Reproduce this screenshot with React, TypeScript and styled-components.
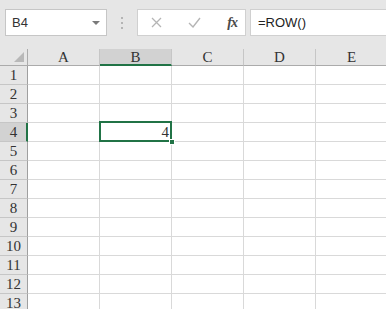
import React from "react";
import styled, { createGlobalStyle } from "styled-components";

const GlobalStyle = createGlobalStyle`
  html, body {
    margin: 0;
    padding: 0;
    background: #ffffff;
  }
  * {
    box-sizing: border-box;
  }
`;

const Page = styled.div`
  width: 386px;
  height: 309px;
  overflow: hidden;
  background: #ffffff;
`;

const Toolbar = styled.div`
  height: 49px;
  background: #e6e6e6;
  display: flex;
  align-items: flex-start;
  padding: 9px 0 0 5px;
`;

const NameBox = styled.div`
  width: 102px;
  height: 27px;
  background: #ffffff;
  border: 1px solid #c6c6c6;
  display: flex;
  align-items: center;
  justify-content: space-between;
  padding: 0 6px 0 6px;
  font-family: "Liberation Sans", Arial, sans-serif;
  font-size: 13px;
  color: #333333;
`;

const Caret = styled.span`
  width: 0;
  height: 0;
  border-left: 4px solid transparent;
  border-right: 4px solid transparent;
  border-top: 4px solid #7a7a7a;
`;

const Grip = styled.div`
  width: 30px;
  height: 27px;
  display: flex;
  flex-direction: column;
  align-items: center;
  justify-content: center;
  gap: 3px;
`;

const Dot = styled.span`
  width: 2px;
  height: 2px;
  background: #b4b4b4;
`;

const FuncBox = styled.div`
  width: 109px;
  height: 27px;
  background: #ffffff;
  border: 1px solid #d0d0d0;
  display: flex;
  align-items: center;
  justify-content: space-between;
  padding: 0 8px 0 13px;
`;

const Fx = styled.span`
  font-family: "Liberation Serif", "Times New Roman", serif;
  font-style: italic;
  font-weight: bold;
  font-size: 14px;
  color: #4a4a4a;
  letter-spacing: -1px;
`;

const FormulaBox = styled.div`
  flex: 1;
  margin-left: 4px;
  height: 27px;
  background: #ffffff;
  border: 1px solid #d0d0d0;
  border-right: none;
  display: flex;
  align-items: center;
  padding-left: 7px;
  font-family: "Liberation Sans", Arial, sans-serif;
  font-size: 13px;
  color: #222222;
`;

const Grid = styled.div`
  display: grid;
  grid-template-columns: 28px repeat(5, 72px);
  grid-auto-rows: 19px;
  grid-template-rows: 17px;
  font-family: "Liberation Serif", "Times New Roman", serif;
  font-size: 15px;
  color: #333333;
`;

const Corner = styled.div`
  position: relative;
  background: #e6e6e6;
  border-right: 1px solid #ababab;
  border-bottom: 1px solid #ababab;
  &::after {
    content: "";
    position: absolute;
    right: 3px;
    bottom: 3px;
    width: 0;
    height: 0;
    border-left: 10px solid transparent;
    border-bottom: 10px solid #b8b8b8;
  }
`;

const ColHead = styled.div<{ $active?: boolean }>`
  background: ${(p) => (p.$active ? "#d2d2d2" : "#e6e6e6")};
  border-right: 1px solid #c6c6c6;
  border-bottom: ${(p) => (p.$active ? "2px solid #217346" : "1px solid #ababab")};
  display: flex;
  align-items: center;
  justify-content: center;
  padding-top: ${(p) => (p.$active ? "1px" : "0")};
`;

const RowHead = styled.div<{ $active?: boolean }>`
  background: ${(p) => (p.$active ? "#d2d2d2" : "#e6e6e6")};
  border-right: ${(p) => (p.$active ? "2px solid #217346" : "1px solid #9f9f9f")};
  border-bottom: 1px solid #c6c6c6;
  display: flex;
  align-items: center;
  justify-content: center;
  padding-left: ${(p) => (p.$active ? "1px" : "0")};
`;

const Cell = styled.div<{ $selected?: boolean }>`
  position: relative;
  z-index: ${(p) => (p.$selected ? 2 : "auto")};
  border-right: 1px solid #d9d9d9;
  border-bottom: 1px solid #d9d9d9;
  display: flex;
  align-items: center;
  justify-content: flex-end;
  padding-right: 2px;
`;

const Selection = styled.div`
  position: absolute;
  top: -2px;
  left: -1px;
  right: -1px;
  bottom: -1px;
  border: 2px solid #217346;
  pointer-events: none;
`;

const Handle = styled.div`
  position: absolute;
  right: -4px;
  bottom: -4px;
  width: 6px;
  height: 6px;
  background: #217346;
  border: 1px solid #ffffff;
`;

const columns = ["A", "B", "C", "D", "E"];
const rows = Array.from({ length: 13 }, (_, i) => i + 1);

export default function App() {
  return (
    <Page>
      <GlobalStyle />
      <Toolbar>
        <NameBox>
          <span>B4</span>
          <Caret />
        </NameBox>
        <Grip>
          <Dot />
          <Dot />
          <Dot />
        </Grip>
        <FuncBox>
          <svg width="11" height="11" viewBox="0 0 11 11">
            <path d="M1 1 L10 10 M10 1 L1 10" stroke="#b5b5b5" strokeWidth="1.3" fill="none" />
          </svg>
          <svg width="13" height="11" viewBox="0 0 13 11">
            <path d="M1 6 L5 10 L12 1" stroke="#b5b5b5" strokeWidth="1.4" fill="none" />
          </svg>
          <Fx>fx</Fx>
        </FuncBox>
        <FormulaBox>=ROW()</FormulaBox>
      </Toolbar>
      <Grid>
        <Corner />
        {columns.map((c) => (
          <ColHead key={c} $active={c === "B"}>
            {c}
          </ColHead>
        ))}
        {rows.map((r) => (
          <React.Fragment key={r}>
            <RowHead $active={r === 4}>{r}</RowHead>
            {columns.map((c) =>
              r === 4 && c === "B" ? (
                <Cell key={c} $selected>
                  4
                  <Selection />
                  <Handle />
                </Cell>
              ) : (
                <Cell key={c} />
              )
            )}
          </React.Fragment>
        ))}
      </Grid>
    </Page>
  );
}
